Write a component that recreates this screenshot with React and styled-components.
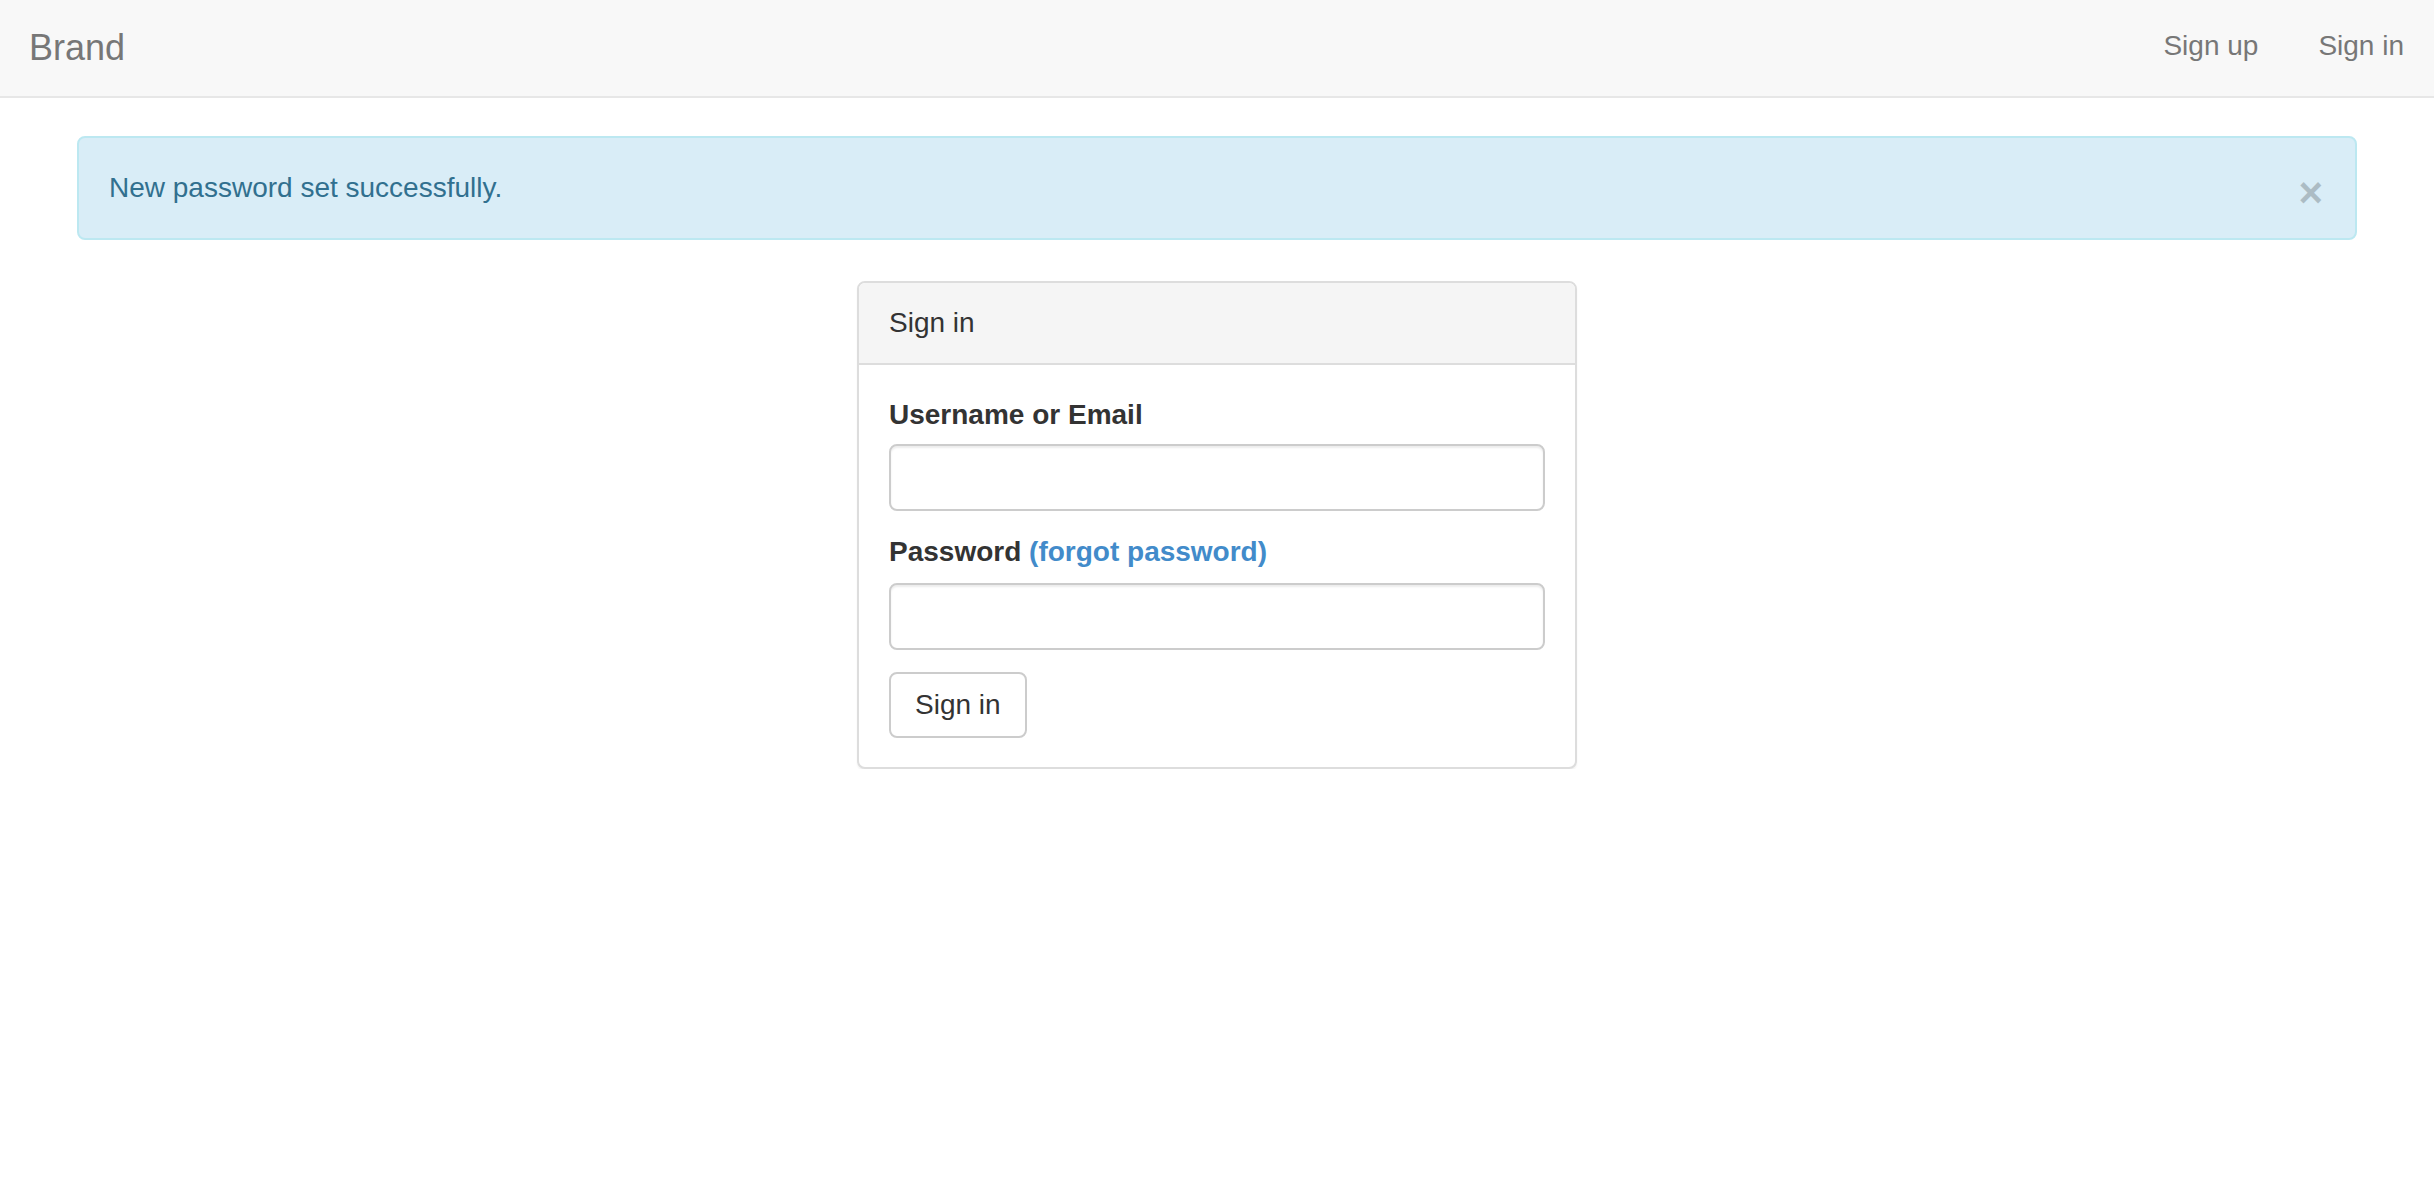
import React from 'react';
import styled, { createGlobalStyle } from 'styled-components';

const GlobalStyle = createGlobalStyle`
  html, body {
    margin: 0;
    padding: 0;
    background: #fff;
  }
  body {
    font-family: "Liberation Sans", Arial, Helvetica, sans-serif;
    font-size: 28px;
    line-height: 40px;
    color: #333;
  }
  * { box-sizing: border-box; }
`;

const Navbar = styled.nav`
  display: flex;
  align-items: center;
  justify-content: space-between;
  height: 98px;
  background: #f8f8f8;
  border-bottom: 2px solid #e7e7e7;
  margin-bottom: 38px;
`;

const Brand = styled.a`
  padding: 0 30px 0 29px;
  font-size: 36px;
  line-height: 40px;
  color: #777;
  text-decoration: none;
`;

const NavList = styled.ul`
  display: flex;
  margin: 0;
  padding: 0;
  list-style: none;
`;

const NavLink = styled.a`
  display: block;
  padding: 0 30px;
  margin-top: -4px;
  font-size: 28px;
  line-height: 40px;
  color: #777;
  text-decoration: none;
`;

const Container = styled.div`
  max-width: 2340px;
  margin: 0 auto;
  padding: 0 30px;
`;

const Alert = styled.div`
  display: flex;
  align-items: center;
  justify-content: space-between;
  padding: 30px 32px 30px 30px;
  margin-bottom: 41px;
  background: #d9edf7;
  border: 2px solid #bce8f1;
  border-radius: 8px;
  color: #31708f;
`;

const Close = styled.button`
  border: 0;
  padding: 0;
  background: transparent;
  font-family: "Liberation Sans", Arial, sans-serif;
  font-size: 42px;
  font-weight: bold;
  line-height: 40px;
  color: #000;
  opacity: 0.2;
  position: relative;
  top: 5px;
  cursor: pointer;
`;

const Panel = styled.section`
  width: 720px;
  margin: 0 auto;
  background: #fff;
  border: 2px solid #ddd;
  border-radius: 8px;
  box-shadow: 0 2px 2px rgba(0, 0, 0, 0.05);
`;

const PanelHeading = styled.div`
  padding: 20px 30px;
  background: #f5f5f5;
  border-bottom: 2px solid #ddd;
  border-radius: 6px 6px 0 0;
  color: #333;
`;

const PanelBody = styled.form`
  display: flex;
  flex-direction: column;
  align-items: flex-start;
  padding: 30px 30px 29px;
`;

const FormGroup = styled.div`
  width: 100%;
  margin-bottom: ${(p) => p.$gap || 21}px;
`;

const Label = styled.label`
  display: block;
  margin-bottom: ${(p) => p.$gap || 10}px;
  font-weight: bold;
  color: #333;
`;

const Link = styled.a`
  color: #428bca;
  text-decoration: none;
`;

const Input = styled.input`
  display: block;
  width: 100%;
  height: 67px;
  padding: 12px 24px;
  font: inherit;
  background: #fff;
  border: 2px solid #ccc;
  border-radius: 8px;
  box-shadow: inset 0 2px 2px rgba(0, 0, 0, 0.075);
  outline: none;
`;

const Button = styled.button`
  height: 66px;
  padding: 0 24px;
  font-family: inherit;
  font-size: 28px;
  line-height: 40px;
  color: #333;
  background: #fff;
  border: 2px solid #ccc;
  border-radius: 8px;
  cursor: pointer;
`;

export default function App() {
  return (
    <>
      <GlobalStyle />
      <Navbar>
        <Brand href="#">Brand</Brand>
        <NavList>
          <li><NavLink href="#">Sign up</NavLink></li>
          <li><NavLink href="#">Sign in</NavLink></li>
        </NavList>
      </Navbar>
      <Container>
        <Alert>
          <span>New password set successfully.</span>
          <Close type="button" aria-label="Close">×</Close>
        </Alert>
        <Panel>
          <PanelHeading>Sign in</PanelHeading>
          <PanelBody onSubmit={(e) => e.preventDefault()}>
            <FormGroup>
              <Label $gap={9}>Username or Email</Label>
              <Input type="text" />
            </FormGroup>
            <FormGroup $gap={22}>
              <Label $gap={11}>
                Password <Link href="#">(forgot password)</Link>
              </Label>
              <Input type="password" />
            </FormGroup>
            <Button type="submit">Sign in</Button>
          </PanelBody>
        </Panel>
      </Container>
    </>
  );
}
